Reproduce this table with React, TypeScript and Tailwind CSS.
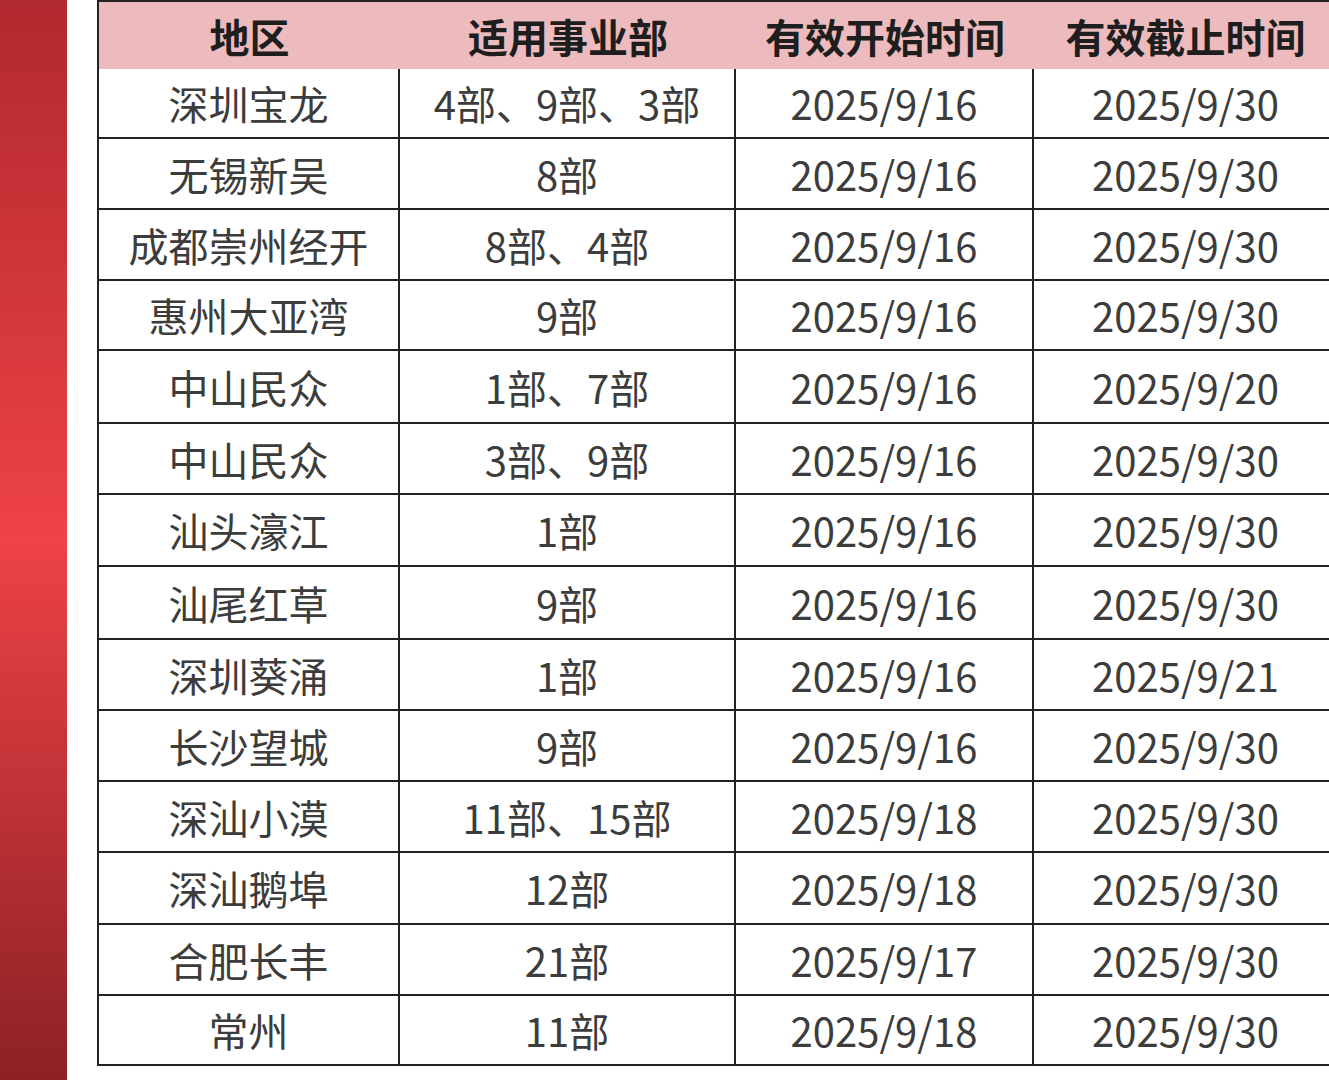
import React from "react";

const rows: { h: string; c: [string, string, string, string] }[] = [
  { h: "h-[70px]", c: ["深圳宝龙", "4部、9部、3部", "2025/9/16", "2025/9/30"] },
  { h: "h-[71px]", c: ["无锡新吴", "8部", "2025/9/16", "2025/9/30"] },
  { h: "h-[71px]", c: ["成都崇州经开", "8部、4部", "2025/9/16", "2025/9/30"] },
  { h: "h-[70px]", c: ["惠州大亚湾", "9部", "2025/9/16", "2025/9/30"] },
  { h: "h-[73px]", c: ["中山民众", "1部、7部", "2025/9/16", "2025/9/20"] },
  { h: "h-[71px]", c: ["中山民众", "3部、9部", "2025/9/16", "2025/9/30"] },
  { h: "h-[72px]", c: ["汕头濠江", "1部", "2025/9/16", "2025/9/30"] },
  { h: "h-[73px]", c: ["汕尾红草", "9部", "2025/9/16", "2025/9/30"] },
  { h: "h-[71px]", c: ["深圳葵涌", "1部", "2025/9/16", "2025/9/21"] },
  { h: "h-[71px]", c: ["长沙望城", "9部", "2025/9/16", "2025/9/30"] },
  { h: "h-[71px]", c: ["深汕小漠", "11部、15部", "2025/9/18", "2025/9/30"] },
  { h: "h-[72px]", c: ["深汕鹅埠", "12部", "2025/9/18", "2025/9/30"] },
  { h: "h-[71px]", c: ["合肥长丰", "21部", "2025/9/17", "2025/9/30"] },
  { h: "h-[70px]", c: ["常州", "11部", "2025/9/18", "2025/9/30"] },
];

const widths = ["w-[301px]", "w-[336px]", "w-[298px]", "w-[303px]"];

export default function App() {
  return (
    <div
      className="flex h-[1080px] w-[1329px] overflow-hidden bg-white"
      style={{ fontFamily: '"Noto Sans CJK SC", "Noto Sans", sans-serif' }}
    >
      <div className="h-full w-[67px] shrink-0 bg-linear-to-b from-[#b0292e] via-[#ee4246] to-[#8c2126]" />
      <div className="ml-[30px] shrink-0">
        <div className="border-l-2 border-t-2 border-[#222]">
          <div className="flex h-[67px] bg-[#edbbbd] text-[40px] font-bold text-[#1e1e1e]">
            {["地区", "适用事业部", "有效开始时间", "有效截止时间"].map((t, i) => (
              <div
                key={i}
                className={`${widths[i]} flex shrink-0 items-center justify-center leading-none`}
              >
                {t}
              </div>
            ))}
          </div>
          {rows.map((r, ri) => (
            <div key={ri} className={`flex ${r.h} text-[40px] text-[#3c3c3c]`}>
              {r.c.map((t, i) => (
                <div
                  key={i}
                  className={`${widths[i]} flex shrink-0 items-center justify-center border-b-2 border-[#222] leading-none ${
                    i < 3 ? "border-r-2" : ""
                  }`}
                >
                  {t}
                </div>
              ))}
            </div>
          ))}
        </div>
      </div>
    </div>
  );
}
